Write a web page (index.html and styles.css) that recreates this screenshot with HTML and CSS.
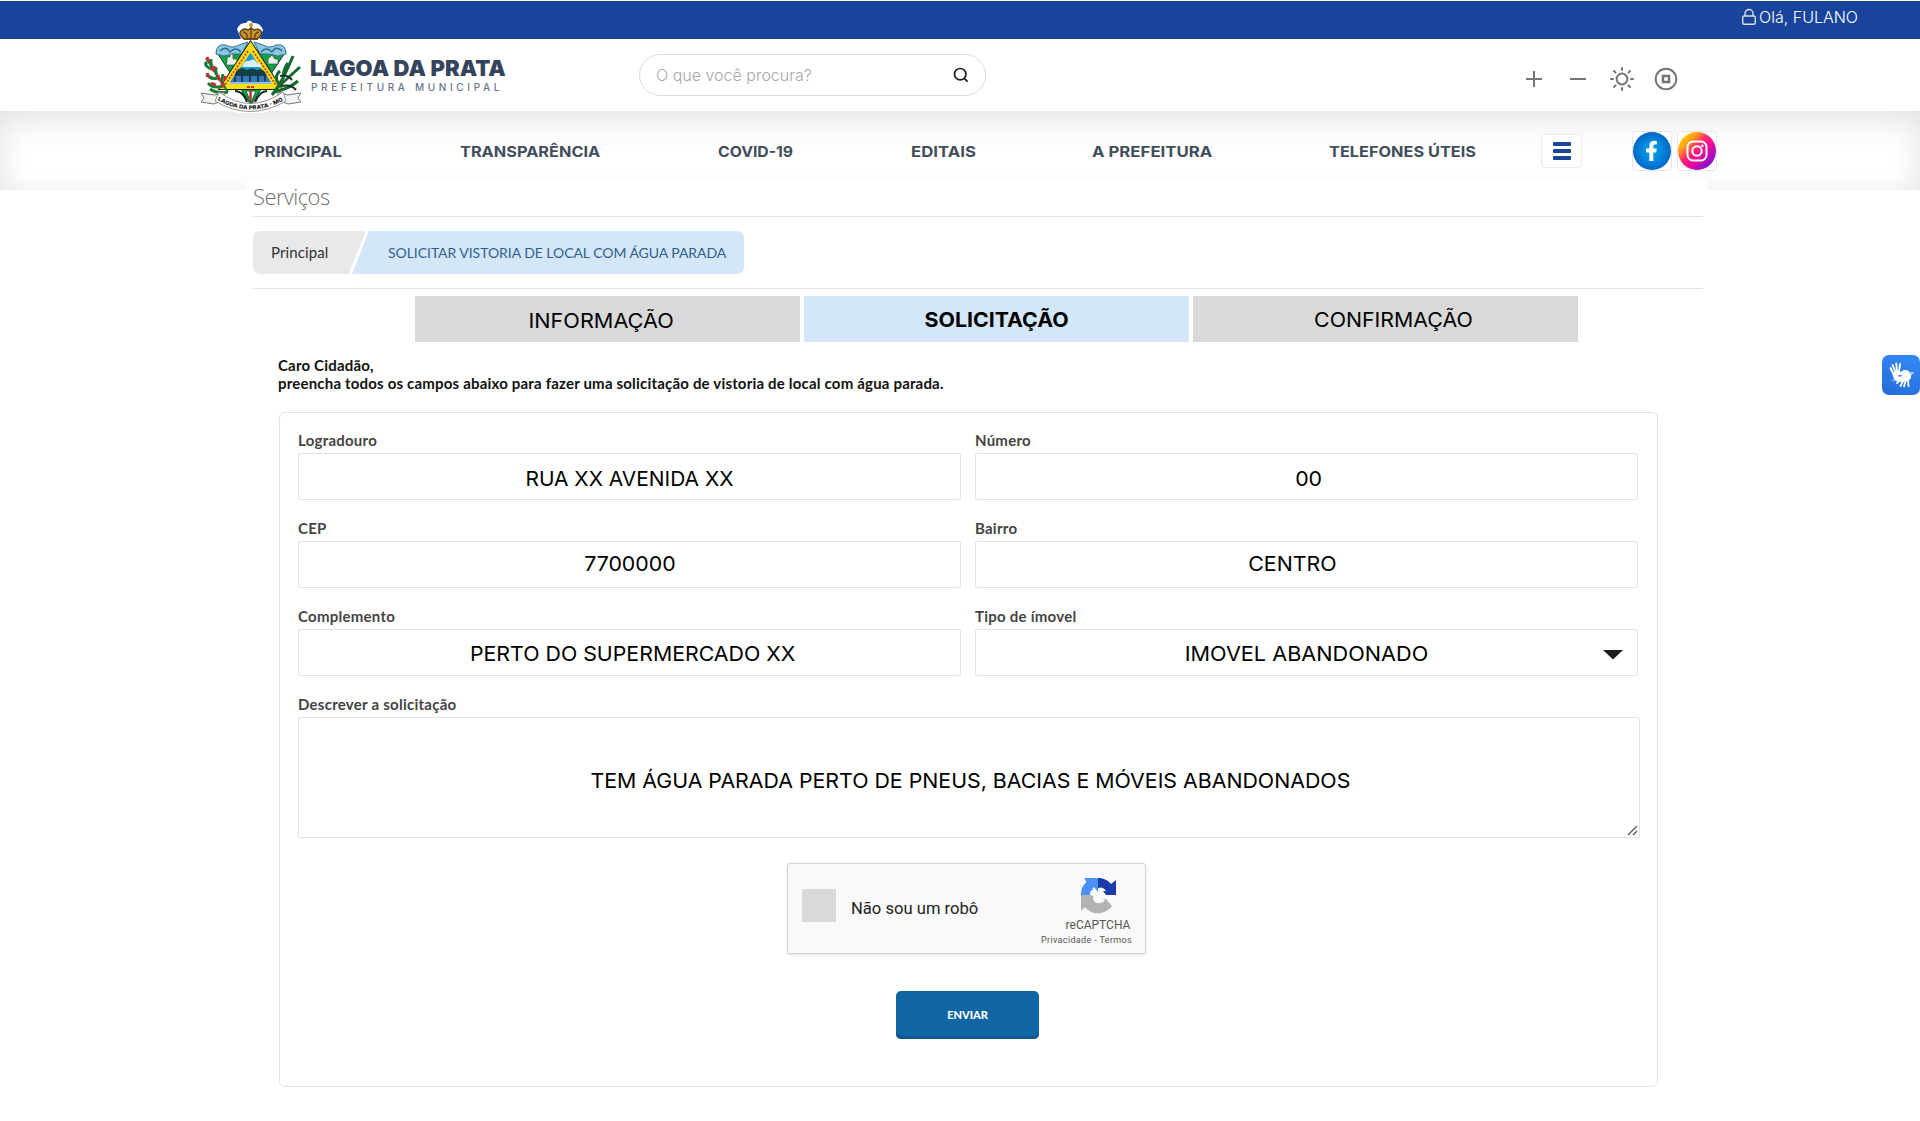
FILE: index.html
```html
<!DOCTYPE html>
<html lang="pt-BR">
<head>
<meta charset="utf-8">
<title>Lagoa da Prata - Solicitar vistoria</title>
<link rel="stylesheet" href="styles.css">
</head>
<body>
<div class="topbar">
  <svg width="16" height="18" viewBox="0 0 16 18" fill="none" stroke="#d9dde6" stroke-width="1.4"><rect x="1.7" y="8" width="12.6" height="8.2" rx="1.5"/><path d="M4 8V5.5a4 4 0 0 1 8 0V8"/></svg>
  <span>Olá, FULANO</span>
</div>
<header class="header">
  <a class="brand">
    <svg class="crest" width="104" height="94" viewBox="0 0 104 94">
      <path d="M42 20L38 10Q41 3 47 4Q50 -1 54 4Q61 3 64 11L60 22L77 24Q86 24 85 33L82 39L101 33V48L97 63L92 74L101 77L103 88L84 87Q69 95 51 94Q30 95 18 87L1 88L2 77L14 76L4 62L3 38L19 43L16 31Q17 24 26 24Z" fill="#fff"/>
      <path d="M17 32H87L52 86Z" fill="#12a34a" stroke="#173b25"/>
      <path d="M17 35Q17 24 27 26Q33 30 40 26L49 23L43 35Q34 34 25 37ZM87 35Q87 24 77 26Q71 30 64 26L55 23L61 35Q70 34 79 37Z" fill="#8dc7df" stroke="#376f91"/>
      <path d="M21 32Q27 26 31 33Q37 27 42 33M83 32Q77 26 73 33Q67 27 62 33" fill="none" stroke="#286c96" stroke-width="1.4"/>
      <path d="M28 43v-5h3v-3h3v5h4v6h-11zM69 45v-5l4-4 3 4h3v5z" fill="#eaf2e8" stroke="#315544" stroke-width=".7"/>
      <path d="M51.500 28L77 67H26Z" fill="#189bd7" stroke="#192022" stroke-width="8"/>
      <path d="M51.500 28L77 67H26Z" fill="#189bd7" stroke="#f5df13" stroke-width="6"/>
      <path d="M44 46q2-5 6-4q5-4 8 2q4 0 4 4H43z" fill="#d9f0fb"/>
      <path d="M38 51q5-4 9 0q7-3 11 0q5-2 8 2l2 4H35z" fill="#173f46"/>
      <path d="M35 57h33l5 8H30z" fill="#3579bd"/>
      <path d="M36 58v5m7-6v6m8-6v6m8-6v6m7-6v5" stroke="#173955" stroke-width="2"/>
      <path d="M30 64h43" stroke="#b6d7ee" stroke-width="1.500"/>
      <path d="M49 32L26 66M54 32l23 34" stroke="#c5392c" stroke-width="1.700" stroke-dasharray="2 1.500"/>
      <path d="M48 68h8" stroke="#c5392c" stroke-width="2" stroke-dasharray="3 1"/>
      <path d="M47 72h10l-5 12z" fill="#f8fff8" stroke="#166b35"/><path d="M51.500 72v10" stroke="#c22d33" stroke-width="2.500"/>
      <path d="M36 72q8 0 12 11M68 72q-7 0-12 11" fill="none" stroke="#092f19" stroke-width="2"/>
      <path d="M45 20q-7-6-2-9q3-2 6 0q3-3 6 0q4-2 7 1q2 4-4 8z" fill="#c59325" stroke="#573816" stroke-width="1.300"/>
      <path d="M52 7v12M44 13q5 1 4 6M60 13q-5 1-4 6M45 20h14" fill="none" stroke="#634018" stroke-width="1.300"/><circle cx="52" cy="6" r="2" fill="#c59325"/>
      <path d="M7 39Q17 55 29 73" fill="none" stroke="#167333" stroke-width="2"/>
      <path d="M8 43q-4 3 4 7m0-10q-1 9 5 11M8 54q2 7 11 5m-10 5q5 6 15 3m-7-19q-1 8 3 11M24 55q-2 8 1 12m-14 3q7 5 18 3" fill="none" stroke="#187c36" stroke-width="3"/>
      <path d="M8 38l2 5m2 6l3 3m-8 4l4 2m8-2l2 6m-9 2l5 2m5-3l3 5m1-11v4m-11-14v4" stroke="#d42637" stroke-width="2.800"/>
      <path d="M73 76Q84 62 94 37M76 73Q91 69 99 62M77 70Q91 57 101 48M80 65Q74 58 81 52M84 60Q84 50 89 44" fill="none" stroke="#126b31" stroke-width="3"/>
      <path d="M82 67q10-2 15 4M81 57q7-2 12 4" fill="none" stroke="#172f20" stroke-width="2"/>
      <path d="M2 74l14 2 9-3v8L15 85 2 83l3-4zM102 74l-14 2-9-3v8l10 4 13-2-3-4z" fill="#f3f3f3" stroke="#777"/>
      <path d="M20 73Q51 96 84 73L87 82Q51 103 16 82Z" fill="#fff" stroke="#777" stroke-width=".8"/>
      <path id="motto" d="M18.500 81Q51 100 85.500 81" fill="none"/>
      <text class="motto"><textPath href="#motto" textLength="69" lengthAdjust="spacingAndGlyphs">LAGOA DA PRATA - MG</textPath></text>
    </svg>
    <span class="brand-text"><b>LAGOA DA PRATA</b><small>PREFEITURA MUNICIPAL</small></span>
  </a>
  <div class="search">
    <span>O que você procura?</span>
    <svg width="16" height="16" viewBox="0 0 16 16" fill="none" stroke="#1d1d1f" stroke-width="1.700"><circle cx="7.200" cy="7.200" r="5.700"/><path d="M11.300 11.300L14.600 14.600"/></svg>
  </div>
  <div class="tools">
    <svg viewBox="0 0 24 24"><path d="M4 12h16M12 4v16"/></svg>
    <svg viewBox="0 0 24 24"><path d="M4 12h16"/></svg>
    <svg viewBox="0 0 24 24"><circle cx="12" cy="12" r="5.400"/><path d="M12 1v2M12 21v2M1 12h2M21 12h2M4 4l1.600 1.600M18.400 18.400L20 20M4 20l1.600-1.600M18.400 5.600L20 4" stroke-linecap="round"/></svg>
    <svg viewBox="0 0 24 24"><circle cx="12" cy="12" r="10.300"/><rect x="9" y="9" width="6" height="6" stroke-width="2.500"/></svg>
  </div>
</header>
<nav class="nav">
  <span class="item">PRINCIPAL</span><span class="item mid">TRANSPARÊNCIA</span><span class="item slim">COVID-19</span><span class="item">EDITAIS</span><span class="item">A PREFEITURA</span><span class="item mid">TELEFONES ÚTEIS</span>
  <div class="burger"><i></i><i></i><i></i></div>
  <div class="social">
    <svg width="40" height="40" viewBox="0 0 40 40"><defs><radialGradient id="fb"><stop offset="0" stop-color="#039ceb"/><stop offset=".5" stop-color="#038be0"/><stop offset="1" stop-color="#0564c4"/></radialGradient></defs><rect x=".5" y=".5" width="39" height="39" rx="3" fill="#fff" stroke="#e4e8ee"/><circle cx="20" cy="20" r="19" fill="url(#fb)"/><path d="M17.300 30V21.500H14V17.600h3.300V15c0-3.500 2-5.300 5.100-5.300 1.200 0 2.400.2 2.400.2v3.500h-1.500c-1.500 0-2 .8-2 1.800v2.400h3.500l-.6 3.900h-2.900V30z" fill="#fff"/></svg>
    <svg width="40" height="40" viewBox="0 0 40 40"><defs><linearGradient id="ig" x1=".08" y1=".12" x2=".85" y2=".9"><stop offset="0" stop-color="#ffd500"/><stop offset=".22" stop-color="#ff9d16"/><stop offset=".42" stop-color="#ff2c6b"/><stop offset=".62" stop-color="#f50a94"/><stop offset="1" stop-color="#7a12dc"/></linearGradient></defs><rect x=".5" y=".5" width="39" height="39" rx="3" fill="#fff" stroke="#e4e8ee"/><circle cx="20" cy="20" r="19" fill="url(#ig)"/><g fill="none" stroke="#fff" stroke-width="2"><rect x="10.500" y="10.500" width="19" height="19" rx="5.500"/><circle cx="20" cy="20" r="4.700"/></g><circle cx="25.400" cy="14.700" r="1.300" fill="#fff"/></svg>
  </div>
</nav>
<main class="content">
  <h1>Serviços</h1>
  <div class="crumbs"><div class="crumb home">Principal</div><div class="crumb here">SOLICITAR VISTORIA DE LOCAL COM ÁGUA PARADA</div></div>
  <div class="tabs"><div class="tab info"><span class="wider">INFORMAÇÃO</span></div><div class="tab active"><span class="wide-text">SOLICITAÇÃO</span></div><div class="tab confirm"><span class="wide-text">CONFIRMAÇÃO</span></div></div>
  <p class="intro">Caro Cidadão,<br>preencha todos os campos abaixo para fazer uma solicitação de vistoria de local com água parada.</p>
  <form class="panel">
    <div class="fields">
      <div class="field"><label>Logradouro</label><div class="box low street"><span class="wide-text">RUA XX AVENIDA XX</span></div></div>
      <div class="field"><label>Número</label><div class="box low number"><span class="wide-text">00</span></div></div>
      <div class="field"><label>CEP</label><div class="box"><span class="wide-text">7700000</span></div></div>
      <div class="field"><label>Bairro</label><div class="box district"><span class="wide-text">CENTRO</span></div></div>
      <div class="field"><label>Complemento</label><div class="box extra"><span class="wide-text">PERTO DO SUPERMERCADO XX</span></div></div>
      <div class="field"><label>Tipo de ímovel</label><div class="box kind"><span class="wider">IMOVEL ABANDONADO</span><svg class="arrow" width="20" height="10" viewBox="0 0 20 10"><path d="M0 0h20L10 9.500z" fill="#1c1b20"/></svg></div></div>
      <div class="field wide"><label>Descrever a solicitação</label><div class="box area"><span class="wide-text">TEM ÁGUA PARADA PERTO DE PNEUS, BACIAS E MÓVEIS ABANDONADOS</span><svg class="grip" width="11" height="11" viewBox="0 0 11 11" stroke="#555" stroke-width="1.300"><path d="M1 10L10 1M6 10l4-4"/></svg></div></div>
    </div>
    <div class="captcha">
      <i class="check"></i><span class="robot">Não sou um robô</span>
      <div class="rc">
        <svg width="36" height="37" viewBox="0 0 36 37"><path d="M18 1v17H1C1 11 3.500 8 6.500 5L4 1z" fill="#4a90f5"/><path d="M18 1c6 0 10 2.500 13 6l5-4v15H18z" fill="#1c3aa9"/><path d="M1 18h17l-5 4c2 5 8 6 12 1h-3l4-1 6 7c-7 9-20 10-27 1l-4 4z" fill="#b3b3b3"/><path d="M10 18q0-6 5-5l-3-1 2-2 4 5 0-4q5-2 8 3l-3 0 3 4h-5l1 3q-2 8-8 3l-1-5z" fill="#f9f9f9"/></svg>
        <span class="rc-name">reCAPTCHA</span><span class="rc-links">Privacidade - Termos</span>
      </div>
    </div>
    <div class="submit">ENVIAR</div>
  </form>
</main>
<div class="libras"><svg width="26" height="28" viewBox="0 0 26 28" fill="none" stroke="#fff" stroke-linecap="round"><path d="M6 14L2.500 7M7.500 11L4.500 4M9 10L8.200 2.500M11 11l1-8" stroke-width="1.900"/><path d="M5 12l6-2 2 3-5 2 6 2-3 3-4-1z" fill="#fff" stroke-width="1"/><path d="M11 13q4-5 9-3l3 3-1 5-9 3-2-4 4-3z" fill="#fff" stroke-width="1"/><path d="M13 18l-4 4M15.500 19l-3 6M18 19l-2 6.500M20 18l.5 7" stroke-width="1.800"/><path d="M22 12h3" stroke="#a7cbfa" stroke-width="2"/><path d="M4 19l2 1" stroke="#a7cbfa"/></svg></div>
</body>
</html>
```
FILE: styles.css
```css
* { box-sizing: border-box; }
body { margin: 0; padding-top: 1px; height: 1121px; background: #fff; font-family: Inter, sans-serif; overflow: hidden; }
svg { flex: none; }

.topbar { height: 38px; padding: 0 62px 6px 0; background: #18459b; color: #fff; display: flex; justify-content: flex-end; align-items: center; gap: 2px; font-size: 16px; font-weight: 300; }

.header { height: 72px; display: flex; padding-left: 199px; }
.brand { display: flex; width: 440px; }
.crest { margin-top: -20px; position: relative; z-index: 1; overflow: visible; }
.motto { font: 800 5.5px Inter, sans-serif; fill: #111; }
.brand-text { display: flex; flex-direction: column; padding: 18px 0 0 7px; color: #33445c; white-space: nowrap; }
.brand-text b { font-size: 22px; line-height: 22px; font-weight: 900; letter-spacing: .05px; }
.brand-text small { font-size: 10px; line-height: 12px; margin: 2px 0 0 1px; font-weight: 500; letter-spacing: 3.65px; color: #66758a; }
.search { width: 347px; height: 42px; margin-top: 15px; border: 1px solid #dcdcdc; border-radius: 21px; padding: 0 16px; display: flex; align-items: center; justify-content: space-between; font-size: 16px; font-weight: 300; color: #a8a8a8; }
.tools { display: flex; gap: 20px; margin: 28px 0 0 536px; }
.tools svg { width: 24px; height: 24px; fill: none; stroke: #757575; stroke-width: 2; }

.nav { height: 79px; padding-left: 254px; display: grid; grid-template-columns: 206px 258px 193px 181px 237px 212px 91px 90px; align-items: center; justify-items: start; font-size: 15px; font-weight: 700; color: #414d5b; white-space: nowrap; box-shadow: inset 0 8px 32px rgba(0, 0, 0, .12); }
.item { display: inline-block; transform: scaleX(1.118); transform-origin: left; padding-top: 1px; }
.item.mid { transform: scaleX(1.088); }
.item.slim { transform: scaleX(1.05); }
.burger { width: 41px; height: 34px; border: 1px solid #ececec; border-radius: 4px; background: #fff; display: flex; flex-direction: column; gap: 3px; align-items: center; justify-content: center; }
.burger i { width: 18px; height: 4px; border-radius: 1px; background: #18459b; }
.social { display: flex; gap: 5px; }

.content { position: relative; width: 1462px; margin: -9px 0 0 246px; padding: 0 5px 0 7px; background: #fff; }
h1 { margin: 0; height: 36px; border-bottom: 1px solid #e4e4e4; font: 300 22px/30px "Open Sans", sans-serif; letter-spacing: -.6px; color: #6f6f6f; }
.crumbs { height: 72px; border-bottom: 1px solid #e4e4e4; padding: 14px 0; display: flex; font-family: Lato, sans-serif; }
.crumb { height: 43px; line-height: 43px; }
.home { width: 113px; padding-left: 18px; background: #e8e9eb; border-radius: 7px 0 0 7px; clip-path: polygon(0 0, 100% 0, 84.500% 100%, 0 100%); font-size: 15px; color: #333; letter-spacing: .1px; }
.here { width: 392px; margin-left: -14px; padding-left: 36px; background: #d4e7f8; border-radius: 0 7px 7px 0; clip-path: polygon(17px 0, 100% 0, 100% 100%, 0 100%); font-size: 14px; letter-spacing: -.05px; color: #315f8d; }
.tabs { display: flex; gap: 4px; margin: 7px 0 0 162px; }
.tab { width: 385px; height: 46px; line-height: 48px; background: #d9d9d9; text-align: center; font-size: 20px; color: #000; }
.wide-text { display: inline-block; transform: scaleX(1.066); }
.wider { display: inline-block; transform: scaleX(1.083); }
.info { padding-right: 12px; line-height: 50px; }
.active { background: #d4e7f8; font-weight: 700; }
.confirm { padding-left: 16px; }
.intro { margin: 14px 0 20px 25px; font: 700 15px/18px Lato, sans-serif; letter-spacing: .19px; color: #111; white-space: nowrap; }
.panel { margin-left: 26px; width: 1379px; height: 675px; border: 1px solid #e2e2e2; border-radius: 6px; padding: 16px 18px 0; display: flex; flex-direction: column; align-items: center; }
.fields { width: 100%; display: grid; grid-template-columns: 663px 663px; column-gap: 14px; }
.field { height: 88px; }
.field label { display: block; height: 24px; font: 700 15px/22px Lato, sans-serif; letter-spacing: .25px; color: #444; }
.box { height: 47px; border: 1px solid #e2e2e2; border-radius: 2px; line-height: 45px; text-align: center; font-size: 20px; color: #000; position: relative; white-space: nowrap; }
.low { line-height: 50px; }
.street .wide-text { transform: scaleX(1.046); }
.number { padding-left: 4px; }
.district { padding-right: 29px; }
.extra { padding-left: 7px; line-height: 49px; }
.kind { line-height: 49px; }
.arrow { position: absolute; right: 14px; top: 20px; }
.wide { grid-column: 1 / 3; height: 146px; width: 1342px; }
.area { height: 121px; line-height: 126px; padding-left: 2px; }
.grip { position: absolute; right: 1px; bottom: 1px; }
.captcha { width: 359px; height: 91px; margin: 24px 0 0 -4px; border: 1px solid #d3d3d3; border-radius: 3px; background: #f9f9f9; box-shadow: 0 1px 3px rgba(0, 0, 0, .12); display: flex; font-family: Roboto, sans-serif; }
.check { flex: none; width: 34px; height: 33px; margin: 25px 15px 0 14px; background: #d9d9d9; }
.robot { flex: none; width: 178px; padding-top: 35px; font-size: 16.6px; line-height: 20px; color: #222; }
.rc { flex: none; width: 110px; padding-top: 13px; display: flex; flex-direction: column; align-items: center; color: #555; white-space: nowrap; margin-left: 14px; }
.rc-name { font-size: 12px; line-height: 13px; margin-top: 5px; }
.rc-links { font-size: 9px; line-height: 12px; margin: 2px 23px 0 0; letter-spacing: .35px; }
.submit { width: 143px; height: 48px; margin-top: 37px; border-radius: 5px; background: #1066a3; box-shadow: inset 0 -3px 0 #0d578c; color: #fff; text-align: center; font: 900 11px/47px Lato, sans-serif; margin-left: -2px; }
.libras { position: absolute; left: 1882px; top: 355px; width: 38px; height: 40px; border-radius: 7px; background: linear-gradient(20deg, #246bd9, #348bf6); padding: 6px; }
```
